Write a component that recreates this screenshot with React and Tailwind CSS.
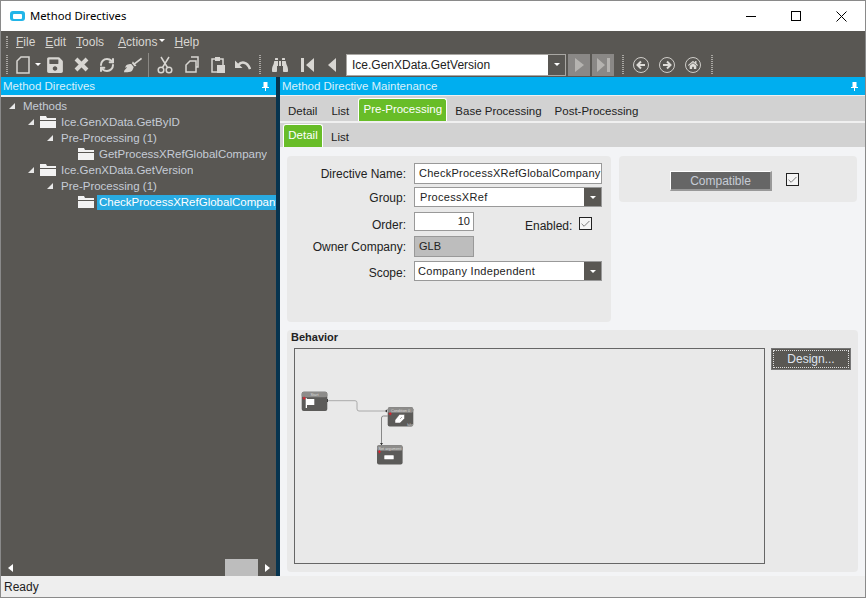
import React from 'react';
import { FaBinoculars, FaBroom, FaHome, FaSave } from 'react-icons/fa';
import { Check, RefreshCw } from 'lucide-react';

const treeRows = [
  { label: 'Methods', arrow: 9, text: 23 },
  { label: 'Ice.GenXData.GetByID', arrow: 28, folder: 40, text: 61 },
  { label: 'Pre-Processing (1)', arrow: 47, text: 61 },
  { label: 'GetProcessXRefGlobalCompany', folder: 78, text: 99 },
  { label: 'Ice.GenXData.GetVersion', arrow: 28, folder: 40, text: 61 },
  { label: 'Pre-Processing (1)', arrow: 47, text: 61 },
  { label: 'CheckProcessXRefGlobalCompany', folder: 78, text: 99, selected: true },
];

const Grip = () => <div className="h-[19px] w-[2px] border-x border-dotted border-[#a9a7a3]" />;

const Folder = () => (
  <svg width="16" height="12" viewBox="0 0 16 12" className="shrink-0">
    <path d="M0 0h6l1 2h9v2H0z" fill="#f2f2f2" />
    <path d="M0 5h16v7H0z" fill="#f2f2f2" />
  </svg>
);

const TreeArrow = () => (
  <svg width="6" height="6" viewBox="0 0 6 6" className="shrink-0">
    <path d="M6 0v6H0z" fill="#e8e8e8" />
  </svg>
);

const TreeRow = ({ row }) => (
  <div className="relative flex h-[16px] items-center">
    {row.arrow && <div className="flex w-[6px]" style={{ marginLeft: row.arrow - 1 }}><TreeArrow /></div>}
    {row.folder && (
      <div className="flex" style={{ marginLeft: row.arrow ? row.folder - row.arrow - 6 : row.folder - 1 }}>
        <Folder />
      </div>
    )}
    <div
      className={`overflow-hidden whitespace-nowrap pl-[2px] text-[11.5px] ${row.selected ? 'h-[15px] flex-1 bg-[#29abe2] leading-[14px] text-white' : 'pt-[1px] text-[#c6ccd6]'}`}
      style={{ marginLeft: row.text - 3 - (row.folder ? row.folder + 15 : row.arrow + 5) }}
    >
      {row.label}
    </div>
  </div>
);

const Header = ({ title }) => (
  <div className="flex h-[18px] items-center justify-between bg-[#00aeef] pl-[2px] pr-[7px] text-[11.5px] text-[#d9f1fb]">
    <span className="pt-[1px]">{title}</span>
    <svg width="7" height="9" viewBox="0 0 7 9">
      <path d="M1.500 0h4v5h1.500v1H4v3H3V6H0V5h1.500z" fill="#fff" />
    </svg>
  </div>
);

const Caret = () => (
  <svg width="6" height="3" viewBox="0 0 6 3"><path d="M0 0h6L3 3z" fill="#fff" /></svg>
);

const FieldLabel = ({ children, className }) => (
  <div className={`w-[119px] text-right text-[#222] ${className}`}>{children}</div>
);

const CheckBox = () => (
  <div className="flex h-[13px] w-[13px] items-center justify-center border border-[#222] bg-[#f5f5f5]">
    <Check size={12} strokeWidth={1.5} className="text-[#444]" />
  </div>
);

const NavCircle = ({ children }) => (
  <div className="flex h-[16px] w-[16px] items-center justify-center rounded-full border-[1.5px] border-[#cfcdc9] text-[#dedcd8]">
    {children}
  </div>
);

const Node = ({ x, y, title, children }) => (
  <g>
    <rect x={x} y={y} width="25.600" height="19.300" rx="2" fill="#5c5b59" />
    <rect x={x} y={y} width="25.600" height="5.500" rx="2" fill="#8d8c8a" />
    <text x={x + 12.8} y={y + 4.2} fontSize="3.800" fill="#ddd" textAnchor="middle">{title}</text>
    <path d={`M${x + 1} ${y + 6.500}h3M${x + 2.500} ${y + 5}v3`} stroke="#e2202c" strokeWidth="1" />
    {children}
  </g>
);

const Diagram = () => (
  <svg width="130" height="125" viewBox="0 0 130 125">
    <path d="M32.300 51.700H60q2 0 2 2v6.300q0 2 2 2h28" fill="none" stroke="#aaa" strokeWidth="1" />
    <path d="M92.700 67H88.500q-2 0-2 2v27" fill="none" stroke="#888" strokeWidth="1" />
    <path d="M33 50v3h-1.500v-3zM92 60.500v3l-2-1.500zM85 94h3l-1.500 2.300z" fill="#333" />
    <Node x={6.700} y={42.700} title="Start">
      <path d="M10.700 49.300H12V59h-1.300zM12 50h7.300v6H12z" fill="#fff" />
    </Node>
    <Node x={92.700} y={58.300} title="Condition 0">
      <path d="M100 71l4.500-5.500h5v4l-4.500 4.500h-5zM105 70l2-2" fill="#fff" stroke="#5c5b59" strokeWidth="0.500" />
      <text x={115.300} y={76.700} fontSize="3" fill="#ddd" textAnchor="middle">false</text>
    </Node>
    <Node x={82} y={96.300} title="Set argument">
      <rect x={89.300} y={106.300} width="9.400" height="4" rx="0.500" fill="#fff" />
    </Node>
  </svg>
);

const App = () => {
  return (
    <div className="flex h-[598px] w-[866px] flex-col overflow-hidden border-x border-t border-[#8a8a8a] bg-white font-['Liberation_Sans',sans-serif] text-[12px]">
      {/* title bar */}
      <div className="flex h-[30px] items-center bg-white pl-[9px]">
        <div className="flex h-[10px] w-[15px] items-center justify-center rounded-[3px] bg-[#22b5e8]">
          <div className="h-[5px] w-[9px] rounded-[1px] bg-white" />
        </div>
        <span className="ml-[5px] flex-1 font-['Noto_Sans',sans-serif] text-[11.3px] text-black">Method Directives</span>
        <div className="h-[1px] w-[10px] bg-black" />
        <div className="ml-[35px] h-[10px] w-[10px] border border-black" />
        <svg width="11" height="11" viewBox="0 0 11 11" className="ml-[35px] mr-[18px]">
          <path d="M0.500 0.500l10 10M10.500 0.500l-10 10" stroke="#000" fill="none" />
        </svg>
      </div>

      {/* menu */}
      <div className="flex h-[21px] items-center bg-[#595753] pl-[5px] text-[#d8d6d2]">
        <div className="h-[12px] w-[2px] border-x border-dotted border-[#a9a7a3]" />
        <span className="ml-[8px]"><u>F</u>ile</span>
        <span className="ml-[10px]"><u>E</u>dit</span>
        <span className="ml-[10px]"><u>T</u>ools</span>
        <span className="ml-[14px]"><u>A</u>ctions</span>
        <span className="ml-[2px] mb-[2px]"><Caret /></span>
        <span className="ml-[9px]"><u>H</u>elp</span>
      </div>

      {/* toolbar */}
      <div className="flex h-[25px] items-center bg-[#595753] pl-[5px] text-[#d8d6d2]">
        <Grip />
        <svg width="14" height="18" viewBox="0 0 14 18" className="ml-[8px]">
          <path d="M5 1h8v16H1V5z" fill="none" stroke="#d8d6d2" strokeWidth="1.500" />
        </svg>
        <span className="ml-[5px]"><Caret /></span>
        <FaSave size={18} className="ml-[5px]" />
        <svg width="15" height="15" viewBox="0 0 15 15" className="ml-[10px]">
          <path d="M2 2l11 11M13 2L2 13" stroke="#d8d6d2" strokeWidth="4" fill="none" />
        </svg>
        <RefreshCw size={16} strokeWidth={3} className="ml-[10px]" />
        <FaBroom size={18} className="ml-[9px]" />
        <div className="ml-[6px] h-[24px] w-[1px] bg-[#8b8985]" />
        <svg width="16" height="18" viewBox="0 0 16 18" className="ml-[8px]">
          <g fill="none" stroke="#d8d6d2" strokeWidth="1.500">
            <circle cx="4" cy="14" r="2.800" />
            <circle cx="12" cy="14" r="2.800" />
            <path d="M5.500 11.500L12 1M10.500 11.500L4 1" />
          </g>
        </svg>
        <svg width="14" height="17" viewBox="0 0 14 17" className="ml-[12px]">
          <g fill="none" stroke="#d8d6d2" strokeWidth="1.500">
            <path d="M6 1h7v10h-2" />
            <path d="M5 5h6v11H1V9z" />
          </g>
        </svg>
        <svg width="14" height="17" viewBox="0 0 14 17" className="ml-[12px]">
          <path d="M1 3h11v13H1z" fill="none" stroke="#d8d6d2" strokeWidth="1.500" />
          <path d="M4 1h5v4H4zM6 9h8v8H6z" fill="#d8d6d2" />
        </svg>
        <svg width="16" height="12" viewBox="0 0 16 12" className="ml-[10px]">
          <path d="M3.500 6C6 2.500 12 2 15 10" fill="none" stroke="#d8d6d2" strokeWidth="2.500" />
          <path d="M0 1.500v7.500h7.500z" fill="#d8d6d2" />
        </svg>
        <div className="ml-[8px]"><Grip /></div>
        <FaBinoculars size={16} className="ml-[11px]" />
        <svg width="13" height="14" viewBox="0 0 13 14" className="ml-[13px]">
          <path d="M0 0h3v14H0zM13 0v14L5 7z" fill="#d8d6d2" />
        </svg>
        <svg width="8" height="14" viewBox="0 0 8 14" className="ml-[14px]">
          <path d="M8 0v14L0 7z" fill="#d8d6d2" />
        </svg>
        <div className="ml-[10px] flex h-[22px] w-[220px] items-center border border-[#a9a7a3] bg-white pl-[5px] text-[12px] text-[#222]">
          <span className="flex-1">Ice.GenXData.GetVersion</span>
          <div className="flex h-full w-[17px] items-center justify-center bg-[#595753]"><Caret /></div>
        </div>
        <div className="ml-[2px] flex h-[22px] w-[22px] items-center justify-center bg-[#8a8886]">
          <svg width="9" height="14" viewBox="0 0 9 14"><path d="M0 0v14l9-7z" fill="#b5b3b0" /></svg>
        </div>
        <div className="ml-[2px] flex h-[22px] w-[22px] items-center justify-center bg-[#8a8886]">
          <svg width="13" height="14" viewBox="0 0 13 14"><path d="M0 0v14l8-7zM10 0h3v14h-3z" fill="#b5b3b0" /></svg>
        </div>
        <div className="ml-[8px]"><Grip /></div>
        <div className="ml-[9px]"><NavCircle>
          <svg width="10" height="10" viewBox="0 0 10 10"><path d="M1 5h8M5 1.500L1.500 5 5 8.500" fill="none" stroke="currentColor" strokeWidth="2" /></svg>
        </NavCircle></div>
        <div className="ml-[10px]"><NavCircle>
          <svg width="10" height="10" viewBox="0 0 10 10"><path d="M1 5h8M5 1.500L8.500 5 5 8.500" fill="none" stroke="currentColor" strokeWidth="2" /></svg>
        </NavCircle></div>
        <div className="ml-[10px]"><NavCircle><FaHome size={10} /></NavCircle></div>
        <div className="ml-[10px]"><Grip /></div>
      </div>

      <div className="flex min-h-0 flex-1">
        {/* left: method tree */}
        <div className="flex w-[275px] flex-col bg-[#595753]">
          <Header title="Method Directives" />
          <div className="h-[2px] bg-[#f0f0f0]" />
          <div className="flex-1 overflow-hidden pt-[1px]">
            {treeRows.map((row) => (
              <TreeRow key={row.label + row.text + row.folder + row.arrow} row={row} />
            ))}
          </div>
          <div className="flex h-[17px] items-center">
            <svg width="5" height="8" viewBox="0 0 5 8" className="ml-[7px]"><path d="M5 0v8L0 4z" fill="#fff" /></svg>
            <div className="ml-[212px] h-[17px] w-[33px] bg-[#bdbdbd]" />
            <svg width="5" height="8" viewBox="0 0 5 8" className="ml-[7px]"><path d="M0 0v8l5-4z" fill="#fff" /></svg>
          </div>
        </div>

        <div className="w-[5px] bg-[#07344f]" />

        {/* right: maintenance panel */}
        <div className="flex flex-1 flex-col bg-[#f3f4f6]">
          <Header title="Method Directive Maintenance" />
          <div className="h-[1px] bg-[#f0f0f0]" />
          <div className="flex h-[25px] items-end bg-[#d2d2d2] pl-[8px] text-[11.5px] text-[#222]">
            <span className="mb-[1px]">Detail</span>
            <span className="mb-[1px] ml-[14px]">List</span>
            <div className="ml-[9px] flex h-[23px] w-[89px] items-start justify-center rounded-t-[3px] border-x border-t border-white bg-[#68bd28] pt-[2px] text-white">
              Pre-Processing
            </div>
            <span className="mb-[1px] ml-[8px]">Base Processing</span>
            <span className="mb-[1px] ml-[13px]">Post-Processing</span>
          </div>
          <div className="h-[2px] bg-[#f0f0f0]" />
          <div className="flex h-[24px] items-end bg-[#d2d2d2] pl-[3px] text-[11.5px] text-[#222]">
            <div className="flex h-[23px] w-[40px] items-start justify-center rounded-t-[3px] border-x border-t border-white bg-[#68bd28] pt-[2px] text-white">
              Detail
            </div>
            <span className="mb-[1px] ml-[8px]">List</span>
          </div>

          <div className="flex flex-1 flex-col gap-[8px] px-[7px] pb-[4px] pt-[9px]">
            <div className="flex items-start gap-[8px]">
              {/* directive form */}
              <div className="flex h-[166px] w-[324px] flex-col rounded-[4px] bg-[#e9e9e9] pt-[7px]">
                <div className="flex h-[21px] items-start gap-[8px]">
                  <FieldLabel className="pt-[2px]">Directive Name:</FieldLabel>
                  <div className="flex h-[21px] w-[188px] items-center overflow-hidden whitespace-nowrap border border-[#999] bg-white pl-[4px] text-[11px] tracking-[0.25px] text-[#222]">
                    CheckProcessXRefGlobalCompany
                  </div>
                </div>
                <div className="mt-[3px] flex h-[20px] items-start gap-[8px]">
                  <FieldLabel className="pt-[2px]">Group:</FieldLabel>
                  <div className="flex h-[20px] w-[188px] items-center border border-[#999] bg-white pl-[5px] text-[11px] tracking-[0.3px] text-[#222]">
                    <span className="flex-1">ProcessXRef</span>
                    <div className="flex h-full w-[17px] items-center justify-center bg-[#595753]"><Caret /></div>
                  </div>
                </div>
                <div className="mt-[5px] flex h-[19px] items-start gap-[8px]">
                  <FieldLabel className="pt-[4px]">Order:</FieldLabel>
                  <div className="h-[19px] w-[60px] border border-[#999] bg-white pr-[3px] text-right text-[11px] leading-[17px] text-[#222]">10</div>
                  <span className="ml-[43px] mt-[5px] text-[#222]">Enabled:</span>
                  <div className="ml-[-1px] mt-[5px]"><CheckBox /></div>
                </div>
                <div className="mt-[5px] flex h-[21px] items-start gap-[8px]">
                  <FieldLabel className="pt-[2px]">Owner Company:</FieldLabel>
                  <div className="h-[21px] w-[60px] border border-[#999] bg-[#bdbdbd] pl-[4px] text-[11px] leading-[19px] text-[#222]">GLB</div>
                </div>
                <div className="mt-[4px] flex h-[20px] items-start gap-[8px]">
                  <FieldLabel className="pt-[3px]">Scope:</FieldLabel>
                  <div className="flex h-[20px] w-[188px] items-center border border-[#999] bg-white pl-[3px] text-[11px] tracking-[0.3px] text-[#222]">
                    <span className="flex-1">Company Independent</span>
                    <div className="flex h-full w-[17px] items-center justify-center bg-[#595753]"><Caret /></div>
                  </div>
                </div>
              </div>

              {/* compatible */}
              <div className="flex h-[46px] w-[238px] items-start rounded-[4px] bg-[#e9e9e9] pl-[51px] pt-[15px]">
                <div className="flex h-[20px] w-[102px] items-center justify-center border-b-2 border-l border-r-2 border-t border-b-[#999] border-l-white border-r-[#999] border-t-white bg-[#666] text-[#c6ccd6]">
                  Compatible
                </div>
                <div className="ml-[14px] mt-[2px]"><CheckBox /></div>
              </div>
            </div>

            {/* behavior */}
            <div className="flex flex-1 flex-col rounded-[4px] bg-[#e9e9e9] px-[7px] pb-[8px]">
              <div className="ml-[-3px] text-[11px] font-bold leading-[14px] text-[#222]">Behavior</div>
              <div className="mt-[4px] flex flex-1 items-start gap-[6px]">
                <div className="h-[216px] w-[471px] border border-[#666]">
                  <Diagram />
                </div>
                <div className="flex h-[22px] w-[80px] items-center justify-center border border-[#777] bg-[#595753] p-[1px] text-[#dfe4ee]">
                  <div className="flex h-full w-full items-center justify-center border border-dotted border-[#ddd]">Design...</div>
                </div>
              </div>
            </div>
          </div>
        </div>
      </div>

      {/* status bar */}
      <div className="flex h-[22px] items-center border-b border-[#8a8a8a] bg-[#eeeeee] pl-[3px] pt-[1px] text-[#222]">Ready</div>
    </div>
  );
};

export default App;
